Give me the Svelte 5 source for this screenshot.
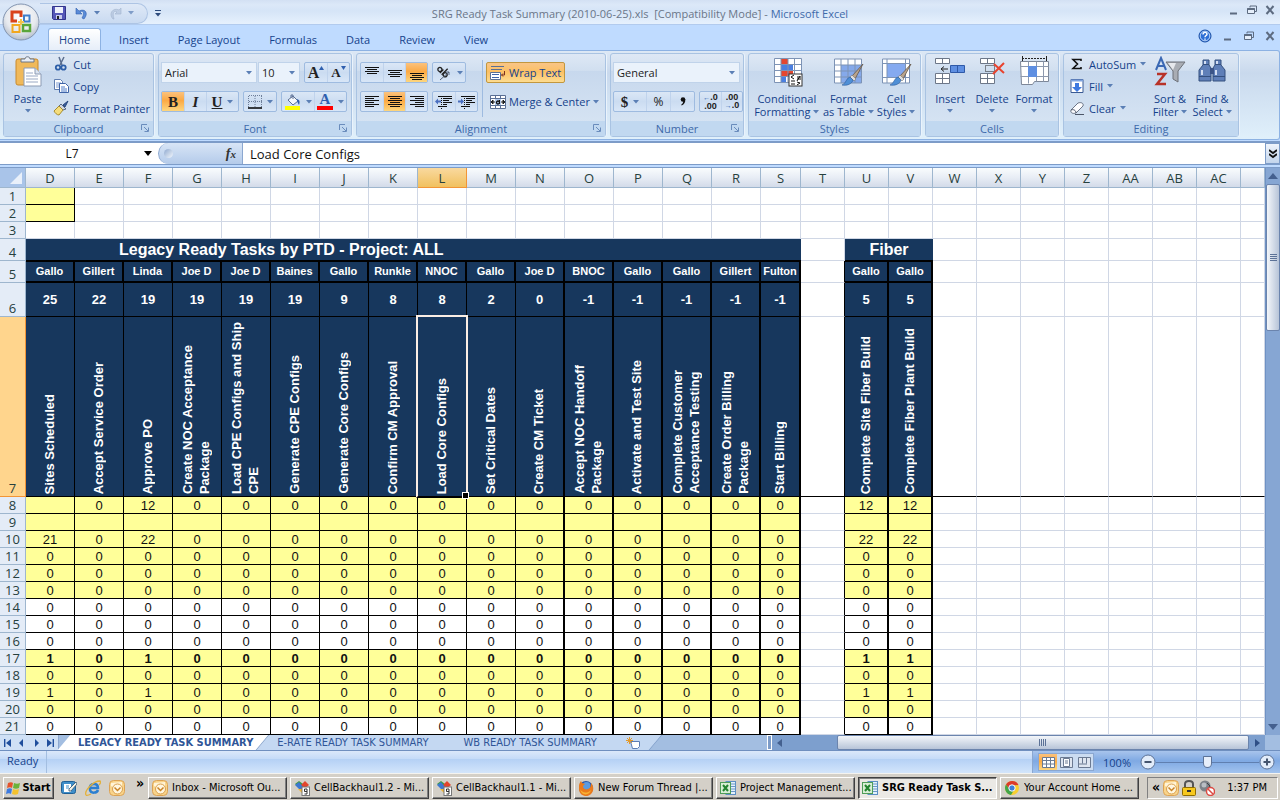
<script lang="ts">
  const ribbonTabs = ["Home", "Insert", "Page Layout", "Formulas", "Data", "Review", "View"];
  let activeTab = $state("Home");

  let fontName = $state("Arial");
  let fontSize = $state("10");
  let numberFormat = $state("General");
  let nameBox = $state("L7");
  let formula = $state("Load Core Configs");
  let zoom = $state(100);

  // every sheet column that is scrolled into view, the last one takes the rest
  const columns = [
    ..."DEFGHIJKLMNOPQR".split("").map((id) => ({ id, width: 49 })),
    { id: "S", width: 40 },
    ...["T", "U", "V", "W", "X", "Y", "Z", "AA", "AB", "AC"].map((id) => ({ id, width: 44 })),
    { id: "", width: 0 }
  ];

  const owners = {
    D: "Gallo", E: "Gillert", F: "Linda", G: "Joe D", H: "Joe D", I: "Baines", J: "Gallo", K: "Runkle",
    L: "NNOC", M: "Gallo", N: "Joe D", O: "BNOC", P: "Gallo", Q: "Gallo", R: "Gillert", S: "Fulton",
    U: "Gallo", V: "Gallo"
  };

  const totals = {
    D: 25, E: 22, F: 19, G: 19, H: 19, I: 19, J: 9, K: 8, L: 8, M: 2, N: 0,
    O: -1, P: -1, Q: -1, R: -1, S: -1, U: 5, V: 5
  };

  const tasks = {
    D: "Sites Scheduled",
    E: "Accept Service Order",
    F: "Approve PO",
    G: "Create NOC Acceptance\nPackage",
    H: "Load CPE Configs and Ship\nCPE",
    I: "Generate CPE Configs",
    J: "Generate Core Configs",
    K: "Confirm CM Approval",
    L: "Load Core Configs",
    M: "Set Critical Dates",
    N: "Create CM Ticket",
    O: "Accept NOC Handoff\nPackage",
    P: "Activate and Test Site",
    Q: "Complete Customer\nAcceptance Testing",
    R: "Create Order Billing\nPackage",
    S: "Start Billing",
    U: "Complete Site Fiber Build",
    V: "Complete Fiber Plant Build"
  };

  // cells that are not zero
  const counts = {
    8: { D: "", F: 12, U: 12, V: 12 },
    10: { D: 21, F: 22, U: 22, V: 22 },
    17: { D: 1, F: 1, U: 1, V: 1 },
    19: { D: 1, F: 1, U: 1, V: 1 }
  };

  const whiteRows = [14, 15, 16, 21];
  const dataRows = Array.from({ length: 14 }, (_, i) => i + 8);

  const inTable = (id) => id in owners;
  const isThick = (id) => "NOPQRSUV".includes(id) && id !== "";

  function countFor(row, id) {
    if (!inTable(id) || row === 9) return "";
    return counts[row]?.[id] ?? 0;
  }

  const sheets = ["LEGACY READY TASK SUMMARY", "E-RATE READY TASK SUMMARY", "WB READY TASK SUMMARY"];
  let activeSheet = $state(sheets[0]);

  const windows = [
    { title: "Inbox - Microsoft Ou...", icon: "outlook" },
    { title: "CellBackhaul1.2 - Mi...", icon: "cell" },
    { title: "CellBackhaul1.1 - Mi...", icon: "cell" },
    { title: "New Forum Thread |...", icon: "firefox" },
    { title: "Project Management...", icon: "excel" },
    { title: "SRG Ready Task S...", icon: "excel", active: true },
    { title: "Your Account Home ...", icon: "chrome" }
  ];
</script>

{#snippet caret()}
  <svg class="caret" width="6" height="4" viewBox="0 0 6 4" aria-hidden="true"><path d="M0 0h6L3 3.5z" fill="#5b7fb5" /></svg>
{/snippet}

{#snippet launcher()}
  <button class="launcher" aria-label="More options">
    <svg width="8" height="8" viewBox="0 0 8 8"><path d="M.5 6V.5H6" fill="none" stroke="#6a8cbc" /><path d="M3 3l4 4M7.5 3.500v4h-4" fill="none" stroke="#6a8cbc" /></svg>
  </button>
{/snippet}

{#snippet lines(widths, y, align)}
  <svg width="16" height="16" viewBox="0 0 16 16">
    {#each widths as w, i}
      <rect x={align === "left" ? 1 : align === "right" ? 15 - w : 8 - w / 2} y={y + i * 2} width={w} height="1" fill="#111" />
    {/each}
  </svg>
{/snippet}

{#snippet indentIcon(out)}
  <svg width="18" height="16" viewBox="0 0 18 16">
    <path d="M3 2.500h14M8 4.500h9M8 6.500h6M8 8.500h9M8 10.500h4M3 12.500h9" stroke="#111" />
    <path d="M6.500 2v13" stroke="#111" stroke-dasharray="1 1" />
    <path d={out ? "M0 7.500l3-3v2h3v2H3v2z" : "M6 7.500l-3-3v2H0v2h3v2z"} fill="#4a6fc0" />
  </svg>
{/snippet}

{#snippet windowButtons()}
  <button aria-label="Minimize"><svg width="10" height="10" viewBox="0 0 10 10"><path d="M1 8.500h7" stroke="#5d6b80" stroke-width="2" /></svg></button>
  <button aria-label="Restore"><svg width="10" height="10" viewBox="0 0 10 10"><path d="M3 2.500V1h6.500v5.500H8" fill="none" stroke="#5d6b80" /><path d="M.5 3.500h7v5h-7z" fill="#e6effb" stroke="#5d6b80" /><path d="M.5 4h7" stroke="#5d6b80" stroke-width="2" /></svg></button>
  <button aria-label="Close"><svg width="10" height="10" viewBox="0 0 10 10"><path d="M1.500 1l7 8M8.500 1l-7 8" stroke="#5d6b80" stroke-width="2" /></svg></button>
{/snippet}

{#snippet brush()}
  <path d="M31 8L20 20l3 3z" fill="#b9a48c" stroke="#5c4c3c" stroke-width=".7" />
  <path d="M20 19l4 4-2 2-4-4z" fill="#ddd" stroke="#666" stroke-width=".5" />
  <path d="M18 21l3 3c-1 4-6 6-11 5 4-1 4-7 8-8z" fill="#4f8fd6" stroke="#2a5a9a" stroke-width=".6" />
{/snippet}

{#snippet taskIcon(name)}
  <svg width="16" height="16" viewBox="0 0 16 16" aria-hidden="true">
    {#if name === "outlook"}
      <rect x=".5" y=".5" width="15" height="15" rx="4" fill="#f9d48a" stroke="#dca254" />
      <path d="M2 3l11-1v4l-5 4-6-4z" fill="#fff4d8" />
      <circle cx="8.500" cy="9" r="5" fill="#fff6df" stroke="#d9a050" />
      <path d="M5.500 7.500l3 3 3-3" fill="none" stroke="#c98328" stroke-width="1.500" />
    {:else if name === "cell"}
      <path d="M1 4l4-3 4 3-4 4z" fill="#3d9a3f" />
      <path d="M5 7l6-6 4 4-6 5z" fill="#e2452c" />
      <path d="M1 5l5 5 3-3-4-5z" fill="#3c78d0" />
      <path d="M4 9l4 4 1-4z" fill="#f2b632" />
      <rect x="8" y="7" width="7.500" height="8.500" fill="#fff" stroke="#777" />
      <path d="M13 11.500h-2.500v-2.500H13v5h-2.500" fill="none" stroke="#333" />
    {:else if name === "firefox"}
      <circle cx="8" cy="8" r="7" fill="#2a55a8" />
      <circle cx="8.500" cy="6" r="4" fill="#5b9be0" />
      <path d="M1 6c0-2 1-4 2-5l1 2 3 1-2 2c0 3 3 4 5 3 3-1 3-4 3-6 3 3 3 8 0 11-4 4-11 2-12-4z" fill="#ea7a1c" />
      <path d="M2 9c2 4 7 5 11 1-1 5-9 7-11-1z" fill="#f9b233" />
    {:else if name === "excel"}
      <rect x="6" y="1.500" width="9.500" height="13" fill="#e4f1fb" stroke="#5b8fc4" />
      <path d="M11 4h4M11 6.500h4M11 9h4M11 11.500h4" stroke="#6a96c6" />
      <rect x=".5" y="2.500" width="10" height="11" fill="#d8efd5" stroke="#4f9d58" />
      <path d="M3 5l5 6M8 5l-5 6" stroke="#23842f" stroke-width="2" />
    {:else}
      <circle cx="8" cy="8" r="7" fill="#f7cf2f" />
      <path d="M2 4.500A7 7 0 0 1 14.500 5L8 5.500 5 9z" fill="#dc3b2b" />
      <path d="M2 4.500A7 7 0 0 0 7 15l3-5-4 0z" fill="#43a547" />
      <circle cx="8" cy="8" r="3.200" fill="#3f7fd8" stroke="#fff" />
    {/if}
  </svg>
{/snippet}

<div class="excel">
  <header class="titlebar">
    <div class="office-button">
      <button aria-label="Office Button">
        <svg width="38" height="38" viewBox="0 0 38 38">
          <defs>
            <radialGradient id="orb" cx=".5" cy=".35" r=".7">
              <stop offset="0" stop-color="#fff" /><stop offset=".6" stop-color="#e6e9ee" /><stop offset="1" stop-color="#a9b4c4" />
            </radialGradient>
          </defs>
          <circle cx="19" cy="19" r="18" fill="url(#orb)" stroke="#8294b0" />
          <g fill="none" stroke-width="3">
            <path d="M15 18h-5v-9h9v5" stroke="#d9421b" />
            <path d="M22 12.500h5.500v6H22z" stroke="#3f7fcb" stroke-width="2" />
            <path d="M10.500 22h7v7h-7z" stroke="#f2a71e" stroke-width="2" />
            <path d="M21 22h7v6h-7z" stroke="#59a63a" stroke-width="2.500" />
            <path d="M16 19h6M19 16v6" stroke="#f4c34d" stroke-width="2" />
          </g>
        </svg>
      </button>
    </div>
    <div class="quick-access">
      <div class="quick-pill">
        <button aria-label="Save">
          <svg width="14" height="14" viewBox="0 0 14 14"><path d="M.5.500h13v13h-12l-1-1z" fill="#5557b8" stroke="#33358c" /><rect x="3" y="1" width="8" height="6" fill="#eef1fb" /><rect x="4" y="9" width="6" height="4" fill="#c9cdec" /><rect x="5" y="10" width="2" height="3" fill="#222" /></svg>
        </button>
        <button aria-label="Undo">
          <svg width="13" height="13" viewBox="0 0 13 13"><path d="M1 1v6h6L5 5c3-2 5 1 2 6l2 1c5-6 1-11-5-8z" fill="#5a8bd8" stroke="#2f5fae" stroke-width=".6" /></svg>
          {@render caret()}
        </button>
        <button aria-label="Redo" class="faded">
          <svg width="13" height="13" viewBox="0 0 13 13"><path d="M12 1v6H6l2-2C5 3 3 6 5 12H4C-1 7 4 0 10 3z" fill="#b3c4dd" stroke="#8fa3c0" stroke-width=".6" /></svg>
          {@render caret()}
        </button>
      </div>
      <button aria-label="Customize Quick Access Toolbar"><svg width="6" height="7" viewBox="0 0 6 7"><path d="M0 .5h6" stroke="#2c4a7c" /><path d="M0 3h6L3 6.500z" fill="#2c4a7c" /></svg></button>
    </div>
    <h1>SRG Ready Task Summary (2010-06-25).xls&nbsp; [Compatibility Mode] - <span>Microsoft Excel</span></h1>
    <div class="window-buttons">{@render windowButtons()}</div>
  </header>

  <nav class="tabstrip">
    {#each ribbonTabs as tab}
      <button class="tab" class:active={tab === activeTab} onclick={() => (activeTab = tab)}>{tab}</button>
    {/each}
    <div class="window-buttons">
      <button aria-label="Help"><svg width="14" height="14" viewBox="0 0 14 14"><circle cx="7" cy="7" r="6" fill="#2f6fd6" stroke="#1b4fa4" /><circle cx="7" cy="7" r="4.800" fill="none" stroke="#bcd5f8" /><path d="M5 5.500c0-3 4-2.500 4-.3C9 6.500 7 6.500 7 8.200M7 9.500v1.300" fill="none" stroke="#fff" stroke-width="1.400" /></svg></button>
      {@render windowButtons()}
    </div>
  </nav>

  <div class="ribbon">
    <section class="group clipboard">
      <div class="body">
        <button class="big">
          <svg width="32" height="32" viewBox="0 0 32 32">
            <rect x="4" y="3" width="22" height="26" rx="2" fill="#f0b95a" stroke="#c98a2c" />
            <path d="M9 6V3h4c0-3 5-3 5 0h4v3z" fill="#e9eef5" stroke="#6b7686" />
            <path d="M12 12h11l6 6v12H12z" fill="#fff" stroke="#8c9bb4" />
            <path d="M23 12v6h6" fill="#dce4f0" stroke="#8c9bb4" />
            <path d="M14 17h7M14 20h12M14 23h12M14 26h12" stroke="#9aa9c4" />
          </svg>
          <span>Paste</span>
          {@render caret()}
        </button>
        <div class="stack">
          <button class="small">
            <svg width="16" height="16" viewBox="0 0 16 16"><path d="M6 1l3 8M11 1L7 9" stroke="#5c6f8f" stroke-width="1.500" /><circle cx="5" cy="11.500" r="2.200" fill="none" stroke="#2e5fa8" stroke-width="1.800" /><circle cx="10.500" cy="11.500" r="2.200" fill="none" stroke="#2e5fa8" stroke-width="1.800" /></svg>
            Cut
          </button>
          <button class="small">
            <svg width="16" height="16" viewBox="0 0 16 16"><path d="M1.500 1.500h6l2 2v8h-8z" fill="#fff" stroke="#5f7db0" /><path d="M3 5h5M3 7h4M3 9h4" stroke="#7c9bd0" /><path d="M6.500 5.500h6l3 3v6h-9z" fill="#fff" stroke="#3f64a8" /><path d="M8 9h4M8 11h6M8 13h6" stroke="#4f7cc8" /></svg>
            Copy
          </button>
          <button class="small">
            <svg width="16" height="16" viewBox="0 0 16 16"><path d="M15 1l-5 4 2 2z" fill="#3c5f9e" stroke="#27477e" /><path d="M8 4l5 5-3 1-4-4z" fill="#cfd6e2" stroke="#5a6a84" /><path d="M6 6l4 4-4 5c-2 0-4-2-5-4z" fill="#f5dd7b" stroke="#a88d2f" /></svg>
            Format Painter
          </button>
        </div>
      </div>
      <footer>Clipboard{@render launcher()}</footer>
    </section>

    <section class="group font">
      <div class="body rows">
        <div class="row">
          <div class="combos">
            <label class="combo wide"><select aria-label="Font" bind:value={fontName}><option>Arial</option><option>Calibri</option></select>{@render caret()}</label>
            <label class="combo narrow"><select aria-label="Font Size" bind:value={fontSize}><option>10</option><option>11</option></select>{@render caret()}</label>
          </div>
          <div class="set">
            <button class="serif grow" aria-label="Increase Font Size">A<svg width="5" height="4" viewBox="0 0 5 4"><path d="M0 4h5L2.500 0z" fill="#2f5fae" /></svg></button>
            <button class="serif shrink" aria-label="Decrease Font Size">A<svg width="5" height="4" viewBox="0 0 5 4"><path d="M0 0h5L2.500 4z" fill="#2f5fae" /></svg></button>
          </div>
        </div>
        <div class="row">
          <div class="set">
            <button class="serif on"><b>B</b></button>
            <button class="serif"><b><i>I</i></b></button>
            <button class="serif drop"><u>U</u>{@render caret()}</button>
          </div>
          <div class="set">
            <button class="drop" aria-label="Borders">
              <svg width="14" height="14" viewBox="0 0 14 14"><path d="M.5 1v11M7 1v11M13.500 1v11M1 .5h13M1 6.500h13" stroke="#6e7f9a" stroke-dasharray="1 1" /><path d="M0 13h14" stroke="#000" stroke-width="1.500" /></svg>
              {@render caret()}
            </button>
          </div>
          <div class="set">
            <button class="drop" aria-label="Fill Color">
              <svg width="16" height="16" viewBox="0 0 16 16"><path d="M3 6l5-4 5 5-5 4z" fill="#f5f8fc" stroke="#5a6f94" /><path d="M6 4V1h2v4" fill="none" stroke="#5a6f94" /><path d="M12 5c3 1 3 3 2 6-1-2-2-3-2-6z" fill="#2f5fae" /><rect y="12" width="15" height="4" fill="#ff0" /></svg>
              {@render caret()}
            </button>
            <button class="drop serif colour" aria-label="Font Color"><span>A</span>{@render caret()}</button>
          </div>
        </div>
      </div>
      <footer>Font{@render launcher()}</footer>
    </section>

    <section class="group alignment">
      <div class="body">
        <div class="rows">
          <div class="row">
            <div class="set thirds">
              <button aria-label="Top Align">{@render lines([14, 10, 14, 10], 2, "mid")}</button>
              <button aria-label="Middle Align">{@render lines([14, 10, 14, 10], 5, "mid")}</button>
              <button aria-label="Bottom Align" class="on">{@render lines([14, 10, 14, 10], 8, "mid")}</button>
            </div>
            <div class="set">
              <button class="drop" aria-label="Orientation">
                <svg width="17" height="16" viewBox="0 0 17 16"><g transform="rotate(45 7 8)" fill="none" stroke="#222" stroke-width="1.300"><circle cx="3" cy="7" r="2" /><path d="M5.500 4.500v5M8 1v8.500" /><circle cx="10.500" cy="7" r="2" /></g><path d="M5 15l9-8M14 7h-3M14 7v3" fill="none" stroke="#56657c" /></svg>
                {@render caret()}
              </button>
            </div>
          </div>
          <div class="row">
            <div class="set thirds">
              <button aria-label="Align Left">{@render lines([14, 9, 14, 9, 14, 9], 2, "left")}</button>
              <button aria-label="Center" class="on">{@render lines([14, 10, 14, 10, 14, 10], 2, "mid")}</button>
              <button aria-label="Align Right">{@render lines([14, 9, 14, 9, 14, 9], 2, "right")}</button>
            </div>
            <div class="set">
              <button aria-label="Decrease Indent">{@render indentIcon(true)}</button>
              <button aria-label="Increase Indent">{@render indentIcon(false)}</button>
            </div>
          </div>
        </div>
        <div class="rows divided">
          <button class="text-button on">
            <svg width="16" height="16" viewBox="0 0 16 16"><path d="M1 1.500h13M1 4.500h11" stroke="#5a6f94" /><path d="M.5 7.500h10v7H.5z" fill="#fff" stroke="#5a6f94" /><path d="M2 9.500h7M2 12.500h7" stroke="#3f64a8" /><path d="M14.500 6v4h-3l1.500-1.500M11.500 10l1.500 1.500" fill="none" stroke="#7c3020" /></svg>
            Wrap Text
          </button>
          <button class="text-button">
            <svg width="16" height="16" viewBox="0 0 16 16"><path d="M.5 1.500h15v13H.5z" fill="#fff" stroke="#5a6f94" /><path d="M.5 4.500h15M.5 11.500h15M5.500 1.500v3M10.500 1.500v3M5.500 11.500v3M10.500 11.500v3" stroke="#5a6f94" /><rect x="5" y="5" width="6" height="6" fill="#b4cdf0" /><path d="M1 8l2-2v4zM15 8l-2-2v4zM2 8h3M11 8h3" stroke="#222" fill="#222" /><circle cx="8" cy="8.500" r="1.500" fill="none" stroke="#111" stroke-width="1.300" /><path d="M9.500 6v4" stroke="#111" /></svg>
            Merge &amp; Center {@render caret()}
          </button>
        </div>
      </div>
      <footer>Alignment{@render launcher()}</footer>
    </section>

    <section class="group number">
      <div class="body rows">
        <label class="combo"><select aria-label="Number Format" bind:value={numberFormat}><option>General</option><option>Number</option></select>{@render caret()}</label>
        <div class="row">
          <div class="set">
            <button class="serif drop"><b>$</b>{@render caret()}</button>
            <button class="percent">%</button>
            <button class="serif comma" aria-label="Comma Style"><svg width="6" height="9" viewBox="0 0 6 9"><circle cx="3" cy="2.500" r="2.300" fill="#111" /><path d="M5.200 2c.5 3-1 5.500-3.500 6.500l-.5-.8C3 6.500 3.500 5 3 3z" fill="#111" /></svg></button>
          </div>
          <div class="set">
            <button class="decimals" aria-label="Increase Decimal"><span><i>←</i>.0</span><span>.00</span></button>
            <button class="decimals" aria-label="Decrease Decimal"><span>.00</span><span><i>→</i>.0</span></button>
          </div>
        </div>
      </div>
      <footer>Number{@render launcher()}</footer>
    </section>

    <section class="group styles">
      <div class="body">
        <button class="big w-large">
          <svg width="32" height="32" viewBox="0 0 32 32">
            <path d="M3.500 2.500h27v24h-27z" fill="#fff" />
            <rect x="10" y="3" width="7" height="6" fill="#e5472f" /><rect x="10" y="9" width="12" height="6" fill="#4a7fe0" /><rect x="10" y="15" width="12" height="6" fill="#e5472f" /><rect x="10" y="21" width="5" height="6" fill="#4a7fe0" />
            <path d="M3.500 2.500h27v24h-27zM3.500 8.500h27M3.500 14.500h27M3.500 20.500h27M10 2v25M17 2v25M23.500 2v25" fill="none" stroke="#7d93b5" />
            <rect x="18" y="18" width="13" height="12" fill="#fff" stroke="#333" />
            <path d="M23 19l-3 2 3 2M20 25h4M20 28h4M26 21h4M26 23h4M29 20l-3 5M26 26l3 1-3 2" fill="none" stroke="#111" />
          </svg>
          <span>Conditional<br />Formatting {@render caret()}</span>
        </button>
        <button class="big w-medium">
          <svg width="32" height="32" viewBox="0 0 32 32">
            <rect x="2" y="3" width="28" height="24" fill="#fff" /><rect x="9" y="9" width="21" height="18" fill="#85a9ea" />
            <path d="M2.500 3h27v24h-27zM2 9h28M2 15h28M2 21h28M9 3v24M16 3v24M23 3v24" fill="none" stroke="#7d93b5" />
            {@render brush()}
          </svg>
          <span>Format<br />as Table {@render caret()}</span>
        </button>
        <button class="big">
          <svg width="32" height="32" viewBox="0 0 32 32">
            <rect x="2" y="3" width="28" height="24" fill="#fff" /><rect x="7" y="8" width="18" height="13" fill="#85aaf0" />
            <path d="M2.500 3h27v24h-27zM2 7.500h28M2 21.500h28M7 3v24M25.500 3v24" fill="none" stroke="#7d93b5" />
            {@render brush()}
          </svg>
          <span>Cell<br />Styles {@render caret()}</span>
        </button>
      </div>
      <footer>Styles</footer>
    </section>

    <section class="group cells">
      <div class="body">
        <button class="big">
          <svg width="32" height="32" viewBox="0 0 32 32">
            <path d="M1.500 2.500h14v5h-14zM8.500 2.500v5M1.500 17.500h14v10h-14zM8.500 17.500v10M1.500 22.500h14" fill="#fff" stroke="#6d7788" />
            <path d="M16.500 9.500h14v7h-14zM23.500 9.500v7" fill="#5e8fe2" stroke="#2e59a8" />
            <path d="M14 13H8M10 10.500L7 13l3 2.500" fill="none" stroke="#222" />
          </svg>
          <span>Insert</span>{@render caret()}
        </button>
        <button class="big">
          <svg width="32" height="32" viewBox="0 0 32 32">
            <path d="M4.500 2.500h14v5h-14zM11.500 2.500v5M4.500 17.500h14v10h-14zM11.500 17.500v10M4.500 22.500h14" fill="#fff" stroke="#6d7788" />
            <path d="M9.500 9.500h9v6h-9z" fill="none" stroke="#222" stroke-dasharray="1 1" />
            <path d="M18 8l10 9M28 7L17 18" stroke="#e8432e" stroke-width="2" />
          </svg>
          <span>Delete</span>{@render caret()}
        </button>
        <button class="big">
          <svg width="32" height="32" viewBox="0 0 32 32">
            <path d="M4 2.500h25M4.500 0v5M28.500 0v5" stroke="#222" stroke-dasharray="2 1" />
            <path d="M2.500 5.500h28v20h-14l-2 3h-11z" fill="#fff" stroke="#7d8798" />
            <path d="M2.500 10.500h28M2.500 20.500h28M10.500 5.500v22M18.500 5.500v20M25.500 5.500v20" stroke="#8d99ae" />
            <rect x="10" y="10" width="9" height="11" fill="#5e8fe2" />
          </svg>
          <span>Format</span>{@render caret()}
        </button>
      </div>
      <footer>Cells</footer>
    </section>

    <section class="group editing">
      <div class="body">
        <div class="stack">
          <button class="small">
            <svg width="16" height="16" viewBox="0 0 16 16"><path d="M12 5V3.500H4l4.500 4.500L4 12.500h8V11" fill="none" stroke="#111" stroke-width="1.600" /></svg>
            AutoSum {@render caret()}
          </button>
          <button class="small">
            <svg width="16" height="16" viewBox="0 0 16 16"><path d="M2 1.500h12v13H2z" fill="#fff" stroke="#3a5a94" /><path d="M2 2.500h12" stroke="#7ea3de" stroke-width="2" /><path d="M6 5h4v4h3l-5 5-5-5h3z" fill="#3f7ae0" /></svg>
            Fill {@render caret()}
          </button>
          <button class="small">
            <svg width="16" height="16" viewBox="0 0 16 16"><path d="M2 10l7-7c3-1 6 0 5 3l-7 7c-3 1-6 0-5-3z" fill="#fdfdff" stroke="#6c7688" /><path d="M2 10c2-1 5 0 5 3M6 14.500h9" fill="none" stroke="#4c5668" /></svg>
            Clear {@render caret()}
          </button>
        </div>
        <button class="big">
          <svg width="32" height="32" viewBox="0 0 32 32">
            <path d="M12 6h19l-7 9v11l-5-3v-8z" fill="#a9adb4" stroke="#6d7178" />
            <path d="M14 7h8l-3 7z" fill="#e6e8ec" />
            <path d="M2 14L7 2l5 12M4 10h6" fill="none" stroke="#3a68b4" stroke-width="2" />
            <path d="M3 18h8L3 28h9" fill="none" stroke="#b83228" stroke-width="2.500" />
          </svg>
          <span>Sort &amp;<br />Filter {@render caret()}</span>
        </button>
        <button class="big">
          <svg width="32" height="32" viewBox="0 0 32 32">
            <path d="M7 4h6v5l2 3v13H3V14l4-5z" fill="#5f7fb8" stroke="#34507f" />
            <path d="M19 4h6v5l4 5v11H17V12l2-3z" fill="#5f7fb8" stroke="#34507f" />
            <path d="M14 12h4v6h-4z" fill="#3b5487" />
            <path d="M6 14v5M20 14v5M9 5v3M21 5v3" stroke="#d3def2" stroke-width="2" />
            <path d="M3 20.500h12M17 20.500h12M7 8.500h6M19 8.500h6" stroke="#34507f" />
          </svg>
          <span>Find &amp;<br />Select {@render caret()}</span>
        </button>
      </div>
      <footer>Editing</footer>
    </section>
  </div>

  <div class="formula-bar">
    <div class="name-box">
      <input aria-label="Name Box" bind:value={nameBox} />
      <svg width="8" height="5" viewBox="0 0 8 5"><path d="M0 0h8L4 5z" fill="#000" /></svg>
    </div>
    <div class="fx"><span class="knob"></span><button aria-label="Insert Function"><i>f<small>x</small></i></button></div>
    <input class="formula" aria-label="Formula" bind:value={formula} />
    <button class="expand" aria-label="Expand Formula Bar"><svg width="8" height="10" viewBox="0 0 8 10"><path d="M0 1l4 3 4-3M0 5l4 3 4-3" fill="none" stroke="#111" stroke-width="1.800" /></svg></button>
  </div>

  <main class="workspace">
    <div class="sheet">
      <table>
        <colgroup>
          <col style:width="26px" />
          {#each columns as col}
            <col style:width={col.width ? `${col.width}px` : "auto"} />
          {/each}
        </colgroup>
        <thead>
          <tr>
            <th class="corner"><svg width="12" height="12" viewBox="0 0 12 12"><path d="M12 0v12H0z" fill="#e9f0fa" /></svg></th>
            {#each columns as col}
              <th scope="col" class:selected={col.id === "L"}>{col.id}</th>
            {/each}
          </tr>
        </thead>
        <tbody>
          {#each [1, 2, 3] as row}
            <tr>
              <th scope="row">{row}</th>
              {#each columns as col}
                <td class:key={row < 3 && col.id === "D"}></td>
              {/each}
            </tr>
          {/each}
          <tr class="banner">
            <th scope="row">4</th>
            <td class="navy legacy" colspan="16">Legacy Ready Tasks by PTD - Project: ALL</td>
            <td></td>
            <td class="navy" colspan="2">Fiber</td>
            {#each columns.slice(19) as col}<td></td>{/each}
          </tr>
          <tr class="owners">
            <th scope="row">5</th>
            {#each columns as col}
              <td class:navy={inTable(col.id)} class:edge={col.id === "T"}>{owners[col.id] ?? ""}</td>
            {/each}
          </tr>
          <tr class="totals">
            <th scope="row">6</th>
            {#each columns as col}
              <td class:navy={inTable(col.id)} class:edge={col.id === "T"} class:thick={isThick(col.id)}>{totals[col.id] ?? ""}</td>
            {/each}
          </tr>
          <tr class="tasks">
            <th scope="row" class="selected">7</th>
            {#each columns as col}
              <td class:navy={inTable(col.id)} class:edge={col.id === "T"} class:thick={isThick(col.id)} class:cursor={col.id === "L"}>
                {#if tasks[col.id]}<span class="rotated">{tasks[col.id]}</span>{/if}
              </td>
            {/each}
          </tr>
          {#each dataRows as row}
            <tr class:strong={row === 17}>
              <th scope="row">{row}</th>
              {#each columns as col}
                <td
                  class:count={inTable(col.id)}
                  class:yellow={inTable(col.id) && !whiteRows.includes(row)}
                  class:edge={col.id === "T"}
                  class:thick={isThick(col.id)}>{countFor(row, col.id)}</td>
              {/each}
            </tr>
          {/each}
        </tbody>
      </table>
    </div>
    <div class="vscroll">
      <button aria-label="Scroll up"><svg width="10" height="6" viewBox="0 0 10 6"><path d="M0 6h10L5 0z" fill="#44608f" /></svg></button>
      <div class="thumb"><i></i><i></i><i></i><i></i></div>
      <button class="down" aria-label="Scroll down"><svg width="10" height="6" viewBox="0 0 10 6"><path d="M0 0h10L5 6z" fill="#44608f" /></svg></button>
    </div>
  </main>

  <div class="sheetbar">
    <div class="sheet-nav">
      <button aria-label="First sheet"><svg width="7" height="8" viewBox="0 0 7 8"><path d="M.7 0v8" stroke="#1f4e9c" stroke-width="1.400" /><path d="M7 0v8L2 4z" fill="#1f4e9c" /></svg></button>
      <button aria-label="Previous sheet"><svg width="7" height="8" viewBox="0 0 7 8"><path d="M5 0v8L1 4z" fill="#1f4e9c" /></svg></button>
      <button aria-label="Next sheet"><svg width="7" height="8" viewBox="0 0 7 8"><path d="M2 0v8l4-4z" fill="#1f4e9c" /></svg></button>
      <button aria-label="Last sheet"><svg width="7" height="8" viewBox="0 0 7 8"><path d="M6.300 0v8" stroke="#1f4e9c" stroke-width="1.400" /><path d="M0 0v8l5-4z" fill="#1f4e9c" /></svg></button>
    </div>
    <div class="sheet-tabs">
      {#each sheets as sheet}
        <button class:active={sheet === activeSheet} onclick={() => (activeSheet = sheet)}><span>{sheet}</span></button>
      {/each}
      <button class="new" aria-label="Insert Worksheet">
        <svg width="14" height="12" viewBox="0 0 14 12"><path d="M4.500 4.500h9v5l-2 2h-5z" fill="#fff" stroke="#5b7db4" /><path d="M3.500 0v7M0 3.500h7M1 1l5 5M6 1L1 6" stroke="#e39a2c" /></svg>
      </button>
    </div>
    <div class="splitter"></div>
    <div class="hscroll">
      <button aria-label="Scroll left"><svg width="5" height="8" viewBox="0 0 5 8"><path d="M5 0v8L0 4z" fill="#44608f" /></svg></button>
      <div class="thumb"><i></i><i></i><i></i><i></i></div>
      <button aria-label="Scroll right"><svg width="5" height="8" viewBox="0 0 5 8"><path d="M0 0v8l5-4z" fill="#2f4f86" /></svg></button>
    </div>
  </div>

  <div class="statusbar">
    <span class="ready">Ready</span>
    <div class="view-tools">
      <div class="views">
        <button class="on" aria-label="Normal"><svg width="13" height="11" viewBox="0 0 13 11"><path d="M.5.500h12v10H.5zM.5 3.500h12M.5 7h12M4.500.500v10M8.500.500v10" fill="#fff" stroke="#6b7a92" /></svg></button>
        <button aria-label="Page Layout"><svg width="13" height="11" viewBox="0 0 13 11"><path d="M.5.500h12v10H.5z" fill="#dfe6f0" stroke="#6b7a92" /><path d="M3.500 1.500h6v8h-6zM5 4h3M5 6h3" fill="#fff" stroke="#6b7a92" /></svg></button>
        <button aria-label="Page Break Preview"><svg width="13" height="11" viewBox="0 0 13 11"><path d="M.5.500h12v10H.5z" fill="#dfe6f0" stroke="#6b7a92" /><path d="M4.500.500v6M8.500.500v6M1 7h8" stroke="#6b7a92" /></svg></button>
      </div>
      <span class="percentage">{zoom}%</span>
      <button aria-label="Zoom Out" class="round"><svg width="16" height="16" viewBox="0 0 16 16"><circle cx="8" cy="8" r="7" fill="#e2ecfa" stroke="#5c7297" /><path d="M4.500 8h7" stroke="#44546e" stroke-width="2" /></svg></button>
      <input type="range" aria-label="Zoom" min="0" max="200" bind:value={zoom} />
      <button aria-label="Zoom In" class="round"><svg width="16" height="16" viewBox="0 0 16 16"><circle cx="8" cy="8" r="7" fill="#e2ecfa" stroke="#5c7297" /><path d="M4.500 8h7M8 4.500v7" stroke="#44546e" stroke-width="2" /></svg></button>
    </div>
  </div>

  <footer class="taskbar">
    <button class="start raised">
      <svg width="16" height="16" viewBox="0 0 16 16"><path d="M2 3c2-1 4-1 5 0L6 8C5 7 3 7 1 8z" fill="#e5532b" /><path d="M8 3c2 1 4 1 6 0l-1 5c-2 1-4 1-6 0z" fill="#6bb33a" /><path d="M1 9c2-1 4-1 5 0l-1 5c-1-1-3-1-5 0z" fill="#3d7be0" /><path d="M7 9c2 1 4 1 6 0l-1 5c-2 1-4 1-6 0z" fill="#f4c22e" /></svg>
      Start
    </button>
    <div class="quick-launch">
      <button aria-label="Show Desktop"><svg width="16" height="16" viewBox="0 0 16 16"><rect x=".5" y="1.500" width="14" height="12" rx="2" fill="#3f8ec9" stroke="#1f6096" /><path d="M3 4h7v8H3z" fill="#fff" /><path d="M5 6h3M5 8h3" stroke="#3f8ec9" /><path d="M15 2L8 9v2h2l6-7z" fill="#f2f2e8" stroke="#35536d" stroke-width=".8" /></svg></button>
      <button aria-label="Internet Explorer"><svg width="16" height="16" viewBox="0 0 16 16"><path d="M13 10c-1 3-7 4-8 0s1-6 4-6 4 2 4 4H5" fill="none" stroke="#2c7fd0" stroke-width="2.500" /><path d="M1 15C-1 11 8 1 15 1c1 1 0 3-1 4M1 15c1 1 3 0 5-1" fill="none" stroke="#e3b13a" stroke-width="1.300" /></svg></button>
      <button aria-label="Outlook">{@render taskIcon("outlook")}</button>
      <span class="more">»</span>
    </div>
    <div class="windows">
      {#each windows as win}
        <button class="raised" class:pressed={win.active}>{@render taskIcon(win.icon)}<span>{win.title}</span></button>
      {/each}
    </div>
    <div class="tray">
      <span class="more">«</span>
      {@render taskIcon("outlook")}
      <svg width="14" height="16" viewBox="0 0 14 16"><path d="M3 8V4c0-4 8-4 8 0v4" fill="none" stroke="#555" stroke-width="2" /><rect x=".5" y="7.500" width="13" height="8" rx="1" fill="#f7c81e" stroke="#8f6c00" /><path d="M5 11h4" stroke="#333" stroke-width="2" /></svg>
      <svg width="16" height="16" viewBox="0 0 16 16"><circle cx="6" cy="6" r="5.500" fill="#7d8288" /><circle cx="5" cy="5" r="2.500" fill="#b9bec4" /><path d="M8 3l3 3-3 5" fill="none" stroke="#3d4146" /><circle cx="11.500" cy="11.500" r="4" fill="#fff" stroke="#dc4a42" stroke-width="1.500" /><path d="M9 9l5 5" stroke="#dc4a42" stroke-width="1.500" /></svg>
      <time>1:37 PM</time>
    </div>
  </footer>
</div>

<style>
  :global(body) {
    overflow: hidden;
  }

  .excel {
    display: flex;
    flex-direction: column;
    height: 100vh;
    background: #bfdbff;
    color: #15428b;
    font: 11px/13px "Open Sans", "Noto Sans", sans-serif;
  }

  .excel * {
    box-sizing: border-box;
  }

  button,
  input,
  select {
    margin: 0;
    padding: 0;
    border: 0;
    background: none;
    color: inherit;
    font: inherit;
    outline: 0;
  }

  button {
    display: flex;
    align-items: center;
    justify-content: center;
    white-space: nowrap;
  }

  svg {
    flex: none;
  }

  /* title bar */
  .titlebar {
    position: relative;
    display: grid;
    grid-template-columns: 1fr auto 1fr;
    flex: none;
    height: 25px;
    background: linear-gradient(#d3e0f3, #dce8f8 20%, #d5e4f7 45%, #e6f1fd);
    border-bottom: 1px solid #b2cbee;
  }

  .titlebar h1 {
    margin: 0;
    padding-top: 2px;
    font-size: 11px;
    font-weight: normal;
    line-height: 24px;
    color: #6a7688;
    white-space: nowrap;
  }

  .titlebar h1 span {
    color: #3e6aaa;
  }

  .office-button {
    position: absolute;
    top: 3px;
    left: 2px;
    z-index: 2;
  }

  .quick-access {
    display: flex;
    align-items: center;
    gap: 7px;
    padding-left: 40px;
  }

  .quick-pill {
    display: flex;
    align-items: center;
    gap: 9px;
    height: 21px;
    padding: 0 13px 0 12px;
    border: 1px solid #adc4e4;
    border-left: 0;
    border-radius: 0 11px 11px 0;
    background: linear-gradient(#dfe9f7, #c9daf1);
  }

  .quick-pill button {
    gap: 6px;
  }

  .faded {
    opacity: 0.7;
  }

  .window-buttons {
    display: flex;
    align-items: center;
    justify-content: flex-end;
    gap: 8px;
    padding: 0 5px 7px 0;
  }

  /* ribbon tabs */
  .tabstrip {
    display: flex;
    align-items: flex-end;
    gap: 7px;
    flex: none;
    height: 25px;
    padding-left: 48px;
    background: #bfdbff;
  }

  .tab {
    height: 22px;
    padding: 0 10px 1px;
    border: 1px solid transparent;
    border-bottom: 0;
    border-radius: 3px 3px 0 0;
  }

  .tab.active {
    background: linear-gradient(#fff, #e6eef9);
    border-color: #8db2e3;
  }

  .tabstrip .window-buttons {
    gap: 11px;
    margin-left: auto;
  }

  /* ribbon */
  .ribbon {
    display: flex;
    gap: 4px;
    flex: none;
    height: 90px;
    padding: 2px 2px 2px 3px;
    border: 1px solid #8db2e3;
    border-width: 1px 1px 1px 0;
    border-radius: 0 3px 3px 0;
    background: linear-gradient(#dde8f5, #c9d9ed 25%, #e0f0fb);
  }

  .group {
    display: flex;
    flex-direction: column;
    border: 1px solid #a9c3e2;
    border-radius: 3px;
    background: linear-gradient(#dee8f5, #d1dff0 20%, #c7d8ed 21%, #d9e6f4);
    box-shadow: 1px 0 #eaf3fc;
  }

  .clipboard {
    width: 151px;
  }

  .font {
    width: 194px;
  }

  .alignment {
    width: 250px;
  }

  .number {
    width: 134px;
  }

  .styles {
    width: 173px;
  }

  .cells {
    width: 134px;
  }

  .editing {
    width: 176px;
  }

  .body {
    display: flex;
    flex: 1;
    padding: 0 3px;
  }

  .group footer {
    position: relative;
    height: 15px;
    line-height: 15px;
    text-align: center;
    color: #3e6aaa;
    background: #c1d8f0;
  }

  .launcher {
    position: absolute;
    top: 3px;
    right: 4px;
  }

  .big {
    flex-direction: column;
    justify-content: flex-start;
    width: 42px;
    padding-top: 2px;
    line-height: 13px;
  }

  .big > svg:first-child {
    margin-bottom: 4px;
  }

  .big > .caret {
    margin-top: 4px;
  }

  .big .caret {
    vertical-align: 2px;
  }

  .w-large {
    width: 70px;
  }

  .w-medium {
    width: 54px;
  }

  .stack {
    display: flex;
    flex-direction: column;
    justify-content: flex-start;
  }

  .clipboard .stack {
    padding-left: 5px;
  }

  .editing .stack {
    width: 82px;
    padding-left: 2px;
  }

  .small {
    justify-content: flex-start;
    gap: 4px;
    height: 22px;
    padding-bottom: 2px;
  }

  .rows {
    display: flex;
    flex-direction: column;
    gap: 8px;
    padding-top: 8px;
  }

  .body.rows {
    padding-left: 2px;
  }

  .row {
    display: flex;
    gap: 4px;
  }

  .combos {
    display: flex;
    gap: 1px;
  }

  .combo {
    display: grid;
    height: 21px;
    background: #eaf2fb;
    border: 1px solid #c0d3ea;
    color: #222;
  }

  .combo select,
  .combo .caret {
    grid-area: 1 / 1;
  }

  .combo select {
    appearance: none;
    width: 100%;
    padding-left: 3px;
  }

  .combo .caret {
    place-self: center end;
    margin-right: 4px;
    pointer-events: none;
  }

  .wide {
    width: 96px;
  }

  .narrow {
    width: 42px;
  }

  .set {
    display: flex;
    height: 21px;
    border: 1px solid #9ebbe0;
    border-radius: 2px;
    background: linear-gradient(#dbe7f6, #cbdcf1 50%, #d8e6f7);
  }

  .set button {
    width: 22px;
  }

  .set button + button {
    border-left: 1px solid #c0d3ec;
  }

  .set .drop {
    gap: 5px;
    width: 32px;
  }

  .on {
    background: linear-gradient(#fbc27d, #fba944 45%, #fdd67e);
  }

  .serif {
    color: #222;
    font: 15px/18px "Liberation Serif", serif;
  }

  .serif u {
    font-weight: bold;
  }

  .grow,
  .shrink {
    align-items: center;
    font-weight: bold;
  }

  .grow svg,
  .shrink svg {
    align-self: flex-start;
    margin-top: 3px;
  }

  .grow {
    font-size: 16px;
  }

  .shrink {
    font-size: 13px;
  }

  .colour span {
    width: 16px;
    border-bottom: 4px solid #f00;
    color: #2f5fae;
    font-weight: bold;
    line-height: 13px;
  }

  .percent {
    color: #222;
    font-size: 12px;
  }

  .number .set button {
    width: 21px;
  }

  .number .set:first-child button {
    width: 24px;
  }

  .number .set:first-child .drop {
    width: 32px;
  }

  .decimals {
    flex-direction: column;
    color: #222;
    font: bold 9px/8px "Liberation Sans", sans-serif;
  }

  .decimals i {
    color: #2f5fae;
    font-size: 7px;
    font-style: normal;
  }

  .divided {
    margin: 6px 0 4px 4px;
    padding: 2px 0 0 3px;
    border-left: 1px solid #9ebbe0;
  }

  .text-button {
    gap: 3px;
    align-self: flex-start;
    height: 21px;
    padding: 0 3px;
    border: 1px solid transparent;
    border-radius: 2px;
  }

  .text-button.on {
    border-color: #c2973e;
    background: linear-gradient(#f9c587, #fcc064 45%, #fddc90);
  }

  /* formula bar */
  .formula-bar {
    display: flex;
    flex: none;
    height: 24px;
    margin: 1px 0 2px;
    border: 1px solid #7d9cc8;
    border-width: 2px 0 1px;
    background: #fff;
    color: #111;
    font-size: 12px;
  }

  .name-box {
    display: flex;
    align-items: center;
    width: 158px;
    padding-right: 6px;
  }

  .name-box input {
    flex: 1;
    width: 0;
    text-align: center;
  }

  .fx {
    display: flex;
    align-items: center;
    justify-content: space-between;
    width: 85px;
    padding: 0 6px 0 5px;
    border: 1px solid #8ba7d0;
    border-width: 0 1px 0 1px;
    border-radius: 12px 0 0 12px;
    background: linear-gradient(#d8e5f6, #b4cbea);
  }

  .fx i {
    color: #333;
    font: italic bold 14px/18px "Liberation Serif", serif;
  }

  .fx small {
    font-size: 11px;
  }

  .knob {
    width: 9px;
    height: 9px;
    border-radius: 50%;
    background: linear-gradient(135deg, #8fa9cf, #f4f8fd);
  }

  .formula {
    flex: 1;
    padding-left: 7px;
    font-size: 13px;
  }

  .expand {
    width: 15px;
    border: 1px solid #7d9cc8;
    background: linear-gradient(#f0f5fc, #c3d5ec);
  }

  /* sheet */
  .workspace {
    display: flex;
    flex: 1;
    min-height: 0;
    border-top: 1px solid #7d9cc8;
  }

  .sheet {
    flex: 1;
    min-width: 0;
    overflow: hidden;
    background: #fff;
  }

  table {
    width: 100%;
    table-layout: fixed;
    border-spacing: 0;
    color: #111;
    font: 13px/15px "Liberation Sans", Arial, sans-serif;
  }

  td,
  th {
    height: 17px;
    padding: 0;
    border: 1px solid #d0d7e5;
    border-width: 0 1px 1px 0;
    text-align: center;
    white-space: nowrap;
  }

  th {
    border-color: #9eb6ce;
    background: #e4ecf7;
    color: #27413e;
    font: 13px/15px "Open Sans", "Noto Sans", sans-serif;
    vertical-align: bottom;
  }

  thead th {
    height: 20px;
    background: linear-gradient(#f9fcfd, #e8edf5 50%, #d3dbe9);
    line-height: 18px;
  }

  thead .corner {
    padding: 0 3px 3px 0;
    background: #a9c4e9;
    line-height: 0;
    text-align: right;
  }

  th.selected {
    background: #ffd58d;
    border-color: #f29536;
  }

  thead .selected {
    background: linear-gradient(#f9d99f, #f1c15f);
  }

  .key {
    border-color: #000;
    background: #ff9;
  }

  .navy {
    border-color: #000;
    background: #17375d;
    color: #fff;
    font-weight: bold;
  }

  .banner td {
    height: 22px;
    font-size: 16px;
    line-height: 20px;
  }

  .banner .navy {
    border-width: 0 0 1px;
  }

  .banner .legacy {
    padding-left: 93px;
    text-align: left;
  }

  .owners td {
    height: 22px;
    font-size: 11px;
  }

  .owners .navy {
    border-width: 1px 2px 2px 0;
  }

  .totals td {
    height: 34px;
  }

  .tasks td {
    height: 180px;
    padding: 0 2px 2px 0;
    border-bottom-color: #000;
    vertical-align: bottom;
  }

  .edge {
    border-right-color: #000;
  }

  td.thick {
    border-right-width: 2px;
  }

  .rotated {
    display: block;
    width: fit-content;
    margin: 0 auto;
    line-height: 17px;
    text-align: left;
    white-space: pre;
    writing-mode: vertical-rl;
    transform: rotate(180deg);
  }

  .cursor {
    position: relative;
  }

  .cursor::before,
  .cursor::after {
    content: "";
    position: absolute;
    pointer-events: none;
  }

  .cursor::before {
    inset: -2px;
    border: 2px solid #fbeee4;
    border-bottom-color: #000;
  }

  .cursor::after {
    right: -3px;
    bottom: -3px;
    width: 5px;
    height: 5px;
    border: 1px solid #fff;
    background: #000;
  }

  .count {
    border-color: #000;
  }

  .yellow {
    background: #ff9;
  }

  .strong td {
    font-weight: bold;
  }

  /* scroll bars */
  .vscroll {
    display: flex;
    flex-direction: column;
    flex: none;
    width: 15px;
    background: #86a6d3;
    border-left: 1px solid #6f92c4;
  }

  .vscroll button {
    height: 16px;
  }

  .vscroll .down {
    margin-top: auto;
  }

  .thumb {
    display: flex;
    align-items: center;
    justify-content: center;
    gap: 1px;
    border: 1px solid #6b84ad;
    border-radius: 2px;
    background: linear-gradient(#f3f6fa, #b7c4d8);
  }

  .vscroll .thumb {
    flex-direction: column;
    height: 26%;
    background: linear-gradient(90deg, #f3f6fa, #b7c4d8);
  }

  .thumb i {
    width: 1px;
    height: 7px;
    background: #5c7297;
  }

  .vscroll .thumb i {
    width: 7px;
    height: 1px;
  }

  /* sheet tabs */
  .sheetbar {
    display: flex;
    flex: none;
    height: 16px;
    padding-right: 15px;
    border-bottom: 1px solid #6f8fbf;
    background: #a3bee1;
    color: #2f5597;
    font: 11px/14px "DejaVu Sans Condensed", Verdana, sans-serif;
  }

  .sheet-nav {
    display: flex;
    width: 59px;
    background: #cfe0f5;
    border-right: 1px solid #8ba7d0;
  }

  .sheet-nav button {
    flex: 1;
  }

  .sheet-tabs {
    display: flex;
    flex: 1;
    padding-left: 5px;
    background: #a3bee1;
  }

  .sheet-tabs button {
    position: relative;
    z-index: 0;
    padding: 0 21px 0 14px;
  }

  .sheet-tabs button::before {
    content: "";
    position: absolute;
    inset: 0 0 0 -6px;
    z-index: -1;
    border-right: 1px solid #7d9cc8;
    background: #c4d8f2;
    transform: skewX(-40deg);
  }

  .sheet-tabs .active {
    z-index: 1;
    padding-right: 10px;
    font-weight: bold;
  }

  .sheet-tabs .active::before {
    background: #fff;
    left: 0;
  }

  .sheet-tabs .new {
    padding: 0 16px 0 8px;
  }

  .splitter {
    width: 5px;
    border: 1px solid #fff;
    background: #7d9cc8;
  }

  .hscroll {
    display: flex;
    width: 39%;
    background: #7d9fce;
  }

  .hscroll button {
    width: 16px;
  }

  .hscroll .thumb {
    flex: 1;
    margin-left: 49px;
  }

  /* status bar */
  .statusbar {
    display: flex;
    justify-content: space-between;
    flex: none;
    height: 22px;
    background: linear-gradient(#dbe8fa, #c5dbf8 35%, #b4d0f5 36%, #d3e5fb);
  }

  .ready {
    padding: 0 8px 0 7px;
    border-right: 1px solid #a3bee1;
    line-height: 20px;
  }

  .view-tools {
    display: flex;
    align-items: center;
    padding: 0 5px;
    border-left: 1px solid #8ba7d0;
    background: linear-gradient(#a8c4ec, #7fa9e3 45%, #a2c3ee);
  }

  .views {
    display: flex;
    height: 18px;
    border: 1px solid #8ba7d0;
    background: #cbdcf1;
  }

  .views button {
    width: 18px;
  }

  .percentage {
    width: 46px;
    text-align: center;
  }

  .view-tools input {
    appearance: none;
    width: 103px;
    height: 14px;
    background: linear-gradient(#5f7fb0, #5f7fb0) center / 100% 1px no-repeat;
  }

  .view-tools input::-webkit-slider-thumb {
    appearance: none;
    width: 9px;
    height: 12px;
    border: 1px solid #5c7297;
    border-radius: 1px 1px 5px 5px;
    background: #e6eefa;
  }

  /* windows task bar */
  .taskbar {
    display: flex;
    align-items: center;
    flex: none;
    height: 27px;
    padding: 1px 2px 0 3px;
    border-top: 1px solid #f4f3ef;
    background: #d4d0c8;
    color: #000;
    font: 11px/13px "DejaVu Sans Condensed", Verdana, sans-serif;
  }

  .raised {
    height: 22px;
    border: 1px solid;
    border-color: #fff #404040 #404040 #fff;
    box-shadow: inset -1px -1px #808080;
  }

  .start {
    width: 51px;
    font-weight: bold;
  }

  .quick-launch {
    display: flex;
    align-items: center;
    gap: 8px;
    width: 94px;
    padding-left: 7px;
  }

  .more {
    font-weight: bold;
    font-size: 14px;
  }

  .quick-launch .more {
    margin: -8px 0 0 3px;
  }

  .windows {
    display: flex;
    flex: 1;
    gap: 3px;
    min-width: 0;
  }

  .windows button {
    flex: 1;
    justify-content: flex-start;
    gap: 4px;
    min-width: 0;
    padding: 0 3px;
  }

  .windows span {
    overflow: hidden;
  }

  .windows .pressed {
    border-color: #404040 #fff #fff #404040;
    box-shadow: inset 1px 1px #808080;
    background: #ebe9e5;
    font-weight: bold;
  }

  .tray {
    display: flex;
    align-items: center;
    gap: 3px;
    width: 131px;
    height: 22px;
    margin-left: 8px;
    padding: 0 4px;
    border: 1px solid;
    border-color: #808080 #fff #fff #808080;
  }

  .tray time {
    margin-left: auto;
    padding-right: 6px;
  }
</style>
